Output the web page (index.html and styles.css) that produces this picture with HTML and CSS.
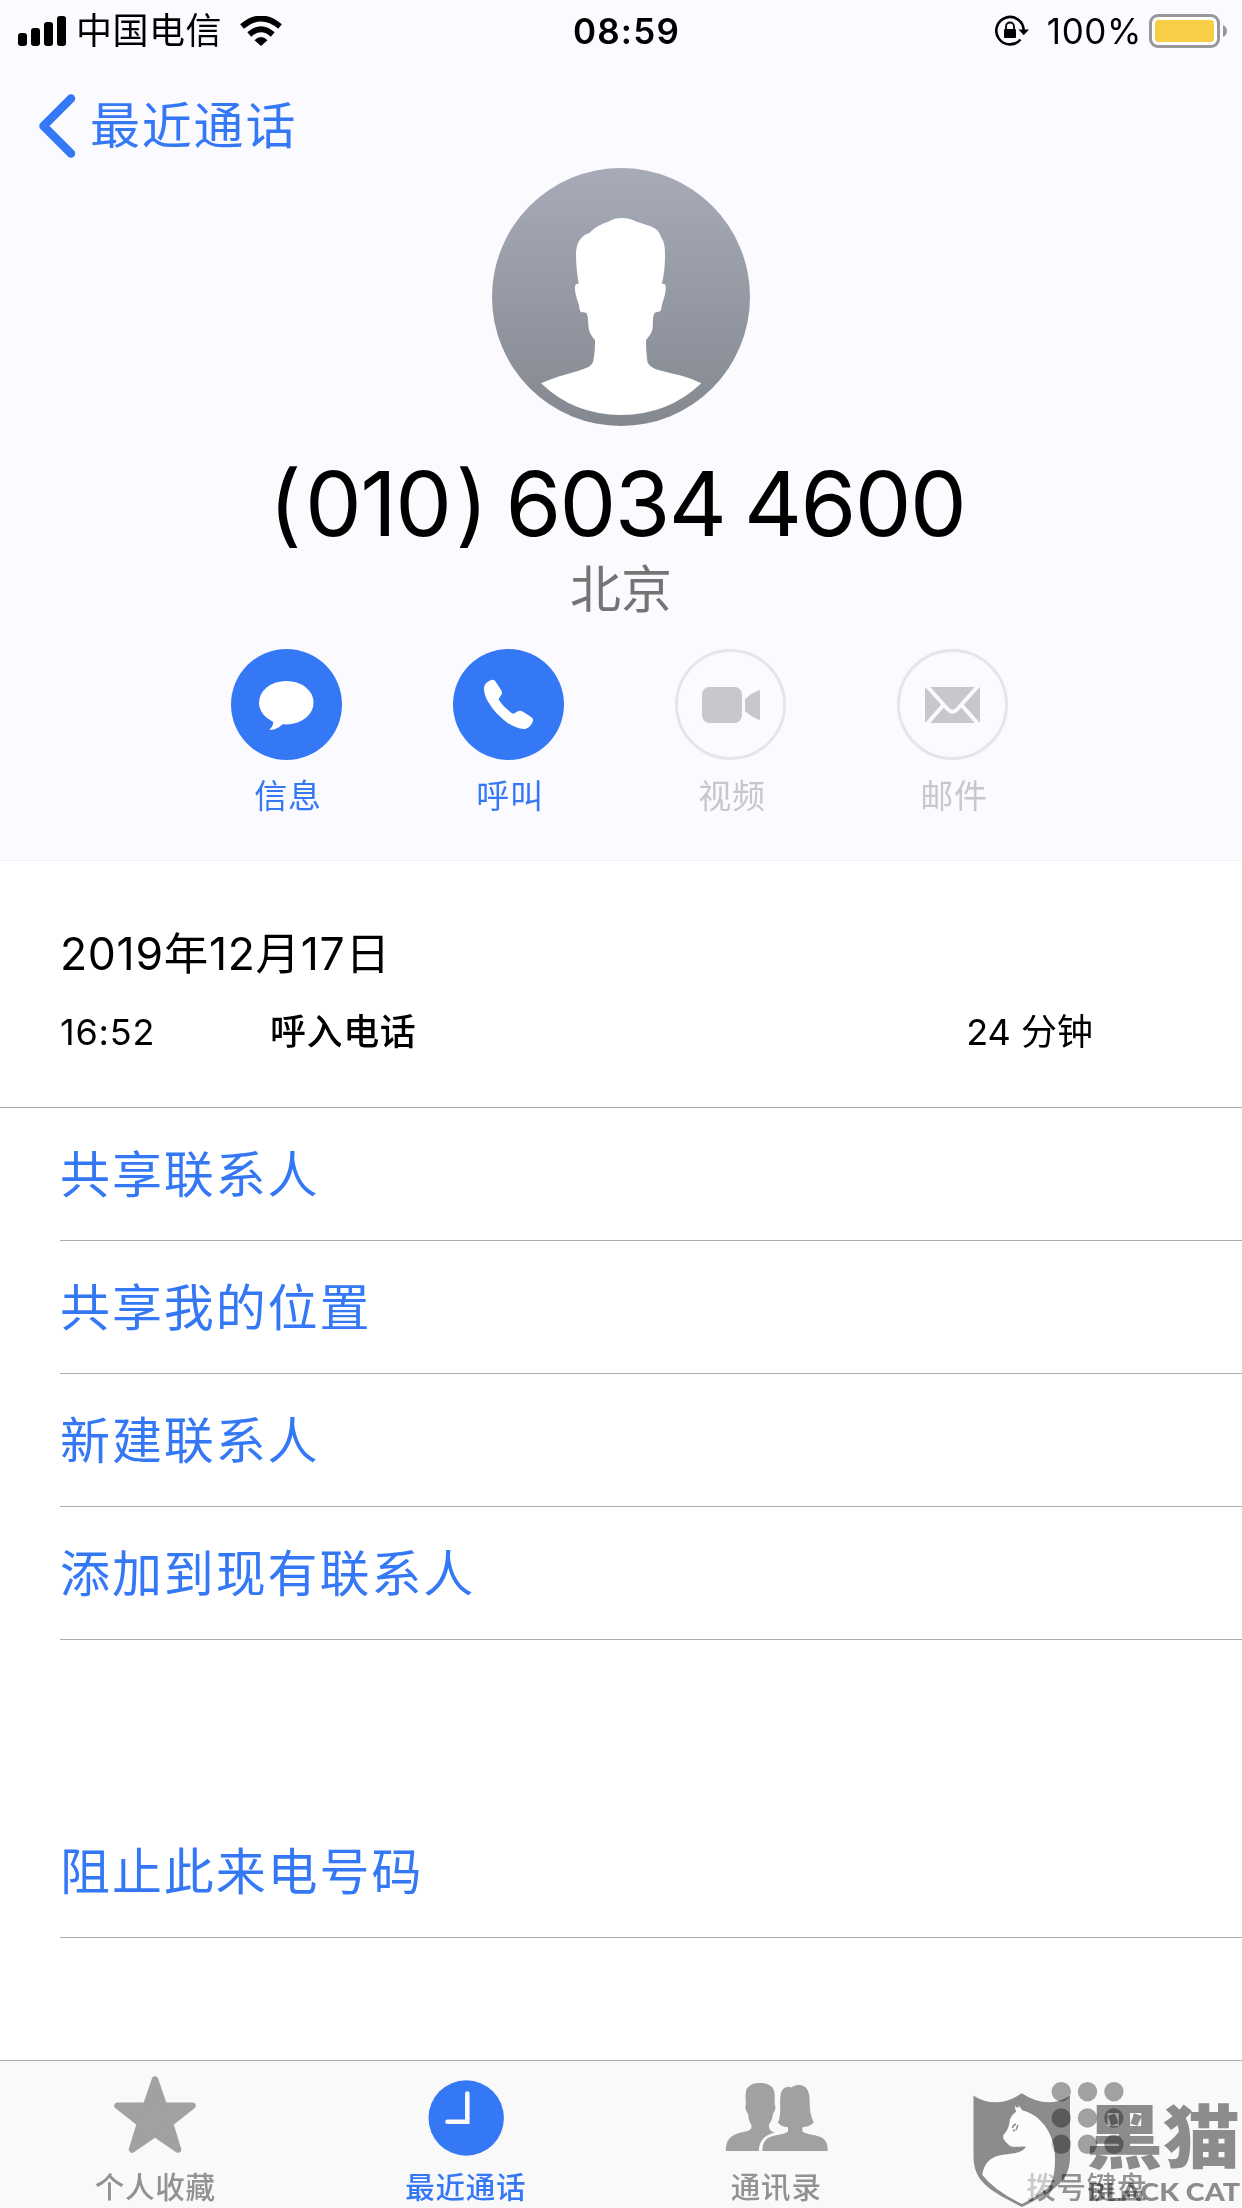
FILE: index.html
```html
<!DOCTYPE html>
<html lang="zh-CN">
    <head>
        <meta charset="UTF-8">
        <title>最近通话</title>
        <link rel="stylesheet" href="styles.css">
    </head>
    <body>
        <div class="header">
            <div class="status">
                <div class="status-left">
                    <svg class="signal" width="48" height="30" viewBox="0 0 48 30">
                        <rect x="0" y="17" width="9" height="13" rx="3"/>
                        <rect x="13" y="12" width="9" height="18" rx="3"/>
                        <rect x="26" y="6" width="9" height="24" rx="3"/>
                        <rect x="39" y="0" width="9" height="30" rx="3"/>
                    </svg>
                    <span class="carrier">中国电信</span>
                    <svg class="wifi" width="42" height="30" viewBox="0 0 42 30">
                        <path d="M2 10.5Q21-5.500 40 10.500M9.300 18.500Q21 8 32.700 18.500" fill="none" stroke="#000" stroke-width="5.800"/>
                        <path d="M14.500 24.200Q21 18 27.500 24.200L21 30z"/>
                    </svg>
                </div>
                <div class="time">08:59</div>
                <div class="status-right">
                    <svg width="34" height="32" viewBox="0 0 34 32">
                        <path d="M25.500 24.500A13.700 13.700 0 1 1 28.700 15" fill="none" stroke="#000" stroke-width="2.600"/>
                        <path d="M23.500 14.500h10.500l-5.300 5.800z"/>
                        <rect x="9" y="14" width="12" height="9" rx="1"/>
                        <path d="M11 15v-3.500a4 4 0 0 1 8 0v3.500" fill="none" stroke="#000" stroke-width="1.800"/>
                    </svg>
                    <span class="percent">100%</span>
                    <svg width="78" height="34" viewBox="0 0 78 34">
                        <rect x="1.500" y="1.500" width="68" height="31" rx="7.500" fill="#fff" stroke="#98989b" stroke-width="3"/>
                        <rect x="6" y="6" width="59" height="22" rx="3.500" fill="#f7ce46"/>
                        <path d="M74 11q4 2 4 6t-4 6z" fill="#98989b"/>
                    </svg>
                </div>
            </div>
            <div class="nav">
                <svg width="38" height="64" viewBox="0 0 38 64">
                    <path d="M33 4.500L5.500 32 33 59.500" fill="none" stroke="#3478f6" stroke-width="8.500" stroke-linecap="round" stroke-linejoin="round"/>
                </svg>
                <span>最近通话</span>
            </div>
            <svg class="avatar" width="258" height="258" viewBox="0 0 258 258">
                <defs>
                    <linearGradient id="grey" x1="0" y1="0" x2="0" y2="1">
                        <stop offset="0" stop-color="#a7abb8"/>
                        <stop offset="1" stop-color="#848890"/>
                    </linearGradient>
                </defs>
                <circle cx="129" cy="129" r="129" fill="url(#grey)"/>
                <path fill="#fff" d="M129.700 50C125 50 121 51 116.300 53.700C108 56.500 102 60 97 65.300C87 68 84 78 84 86C84 96 85 106 86.700 116C84 115.300 82.700 117 83 121C83.500 130 87 134 87.700 142C88.500 145.500 92 144 94.700 145C96.500 150 96 157 97 162C98 166 101 170 103 172C103 181 102.500 188 101 194C99 199 93 200.500 86 203C73 206.500 60 210 49 215.300Q82 247 129 247Q176 247 209.300 215.300C197 209 186 207 172 203.500C164 201.500 158 200 155.500 194C154.500 187 154 180 154 172C157 168.500 160 165 160.700 160.300C161 155 160.500 149 162.500 145C165 143 168.500 145 169.300 141C170 134 173 130 173.700 121C174 117 173 115 169.700 116C172 107 173 99 173 88.700C173 83 173 77 171 72.500C168 68 168 63 162 60C157 57 151 56 144.700 53.700C139 51 135 50 129.700 50z"/>
            </svg>
            <div class="number">(<span class="area">010</span>) 6034 4600</div>
            <div class="city">北京</div>
            <div class="actions">
                <div class="action">
                    <svg width="111" height="111" viewBox="0 0 111 111">
                        <circle cx="55.500" cy="55.500" r="55.500" fill="#3478f6"/>
                        <ellipse cx="55.300" cy="53.700" rx="27.300" ry="21.800" fill="#fff"/>
                        <path d="M41 71Q44.500 75 38.300 80.700Q45 81.500 52 75z" fill="#fff"/>
                    </svg>
                    <span>信息</span>
                </div>
                <div class="action">
                    <svg width="111" height="111" viewBox="0 0 111 111">
                        <circle cx="55.500" cy="55.500" r="55.500" fill="#3478f6"/>
                        <path fill="#fff" d="M37.500 31.300Q40.800 30 42.300 32.300L48.500 41.700Q49.500 43.500 48.500 45.500Q46 49 45.700 50.700Q51 59 59.700 64.700C62 64.500 64 62 67 61.700Q68.500 61.700 70 62.800L78.500 68.200Q80.500 69.500 80 72Q77.500 78.500 73 79.700C66 81 56 76.500 46.500 67C37 57.500 30.500 47 31 39Q31.500 34 37.500 31.300z"/>
                    </svg>
                    <span>呼叫</span>
                </div>
                <div class="action disabled">
                    <svg width="111" height="111" viewBox="0 0 111 111">
                        <circle cx="55.500" cy="55.500" r="54" fill="none" stroke="#e5e5ea" stroke-width="3"/>
                        <rect x="27" y="38" width="40" height="36" rx="7.500" fill="#c7c7cc"/>
                        <path d="M70 50Q77 43.500 85 41V71Q77 68.500 70 62z" fill="#c7c7cc"/>
                    </svg>
                    <span>视频</span>
                </div>
                <div class="action disabled">
                    <svg width="111" height="111" viewBox="0 0 111 111">
                        <circle cx="55.500" cy="55.500" r="54" fill="none" stroke="#e5e5ea" stroke-width="3"/>
                        <rect x="28" y="38" width="55" height="36" fill="#c7c7cc"/>
                        <path d="M28.500 35.500L50.500 60Q55.500 65.500 60.500 60L82.500 35.500M28.500 76.500L46 56.500M82.500 76.500L65 56.500" fill="none" stroke="#fbfaff" stroke-width="4"/>
                    </svg>
                    <span>邮件</span>
                </div>
            </div>
        </div>
        <div class="call">
            <div class="date">2019年12月17日</div>
            <div class="detail">
                <span class="at">16:52</span>
                <span class="kind">呼入电话</span>
                <span class="length">24 分钟</span>
            </div>
        </div>
        <div class="list">
            <div class="row">共享联系人</div>
            <div class="row">共享我的位置</div>
            <div class="row">新建联系人</div>
            <div class="row">添加到现有联系人</div>
            <div class="row block">阻止此来电号码</div>
        </div>
        <div class="tabs">
            <div class="tab">
                <svg width="110" height="90" viewBox="0 0 110 90">
                    <path d="M55 9.500L64 35.800H92.500L70 53.500L78 79.500L55 63.800L32 79.500L40 53.500L17.500 35.800H46z" stroke="#a1a1a1" stroke-width="6.500" stroke-linejoin="round"/>
                </svg>
                <span>个人收藏</span>
            </div>
            <div class="tab active">
                <svg width="110" height="90" viewBox="0 0 110 90">
                    <circle cx="55.200" cy="48" r="37.700"/>
                    <path d="M56.300 23.500V51.700H36.500" fill="none" stroke="#f9f9f9" stroke-width="4.600" stroke-linecap="round"/>
                </svg>
                <span>最近通话</span>
            </div>
            <div class="tab">
                <svg width="110" height="90" viewBox="0 0 110 90">
                    <path d="M4.800 81C4.800 71 8 66 18.800 62.700C24 61.500 29.500 61 30.400 58V54.500C28 52 27.500 47 27 43.500C25 42 23.500 36 25 34.500C24.500 30 24.300 26 25 21.500C25.500 17 28 17 30.400 14.500Q34 12.500 38.800 13C43 13 47 14 50.400 16.500C54 20 54 24 53.500 34.500C55.500 36 54 42 52 43.500C51.500 48 50.500 51 48 54.500C48 58 48 61 53.800 62.300C43 65.500 38 71 37.800 81z"/>
                    <path d="M41.400 81C41.400 74 43.500 69.500 49 67C55 64.500 64 64.500 67 61.500V57.300C63 57 59 55.500 56.800 52.500C59 49 59.400 43 59.200 36C59 27 59 18 66 17Q69 16.500 70.400 17.500C74 14.500 80 14 84 17C88 20.500 88.600 25 88.700 31.700C88.500 40 90 47 92.800 52.500C90 55.500 86 57 81.400 57.300V61.500C85 64.500 94 64.500 99.500 67C105 69.500 106.800 74 106.800 81z"/>
                </svg>
                <span>通讯录</span>
            </div>
            <div class="tab">
                <svg width="110" height="90" viewBox="0 0 110 90">
                    <circle cx="29.200" cy="21.700" r="9.700"/>
                    <circle cx="55.500" cy="21.700" r="9.700"/>
                    <circle cx="81.900" cy="21.700" r="9.700"/>
                    <circle cx="29.200" cy="48" r="9.700"/>
                    <circle cx="55.500" cy="48" r="9.700"/>
                    <circle cx="81.900" cy="48" r="9.700"/>
                    <circle cx="29.200" cy="74.300" r="9.700"/>
                    <circle cx="55.500" cy="74.300" r="9.700"/>
                    <circle cx="81.900" cy="74.300" r="9.700"/>
                </svg>
                <span>拨号键盘</span>
            </div>
        </div>
        <!-- watermark over the last tab -->
        <svg class="cat-body" width="272" height="118" viewBox="0 0 272 118">
            <path d="M12.300 85C13 78 17 69 27 66C36 63 51 65 56 56.700C50 56 45 58 40 56Q35 52 33.300 48.500V45C38 40 39 36 39.500 32C40 27 43 24 46 21.700L44.700 16L48 18L49 15.800L52.500 20.500C69 24 85 42 85 68C85 80 84 91 78 98Q66 107 52 114Q25 101 12.300 85z" fill="#fff" fill-opacity=".5"/>
        </svg>
        <svg class="watermark" width="272" height="118" viewBox="0 0 272 118">
            <path fill-rule="evenodd" d="M3.500 5.700Q27 20 51.700 3.300Q77 20 100 5.700V66C100 91 86 100 52 117C18 100 3.500 91 3.500 66zM12.300 85Q25 101 52 114Q66 107 78 98C84 91 85 80 85 68C85 42 69 24 52.500 20.500L49 15.800L48 18L44.700 16L46 21.700C43 24 40 27 39.500 32C39 36 38 40 33.300 45V48.500Q35 52 40 56C45 58 50 56 56 56.700C51 65 36 63 27 66C17 69 13 78 12.300 85z"/>
            <path d="M42.500 38Q43 35 46 34M48 35L46 40M43 40L45 41" fill="none" stroke="#8c8a8b" stroke-width="1.500"/>
            <text class="brand" x="116" y="73" textLength="154" lengthAdjust="spacingAndGlyphs">黑猫</text>
            <text class="brand-en" x="117" y="111" textLength="153" lengthAdjust="spacingAndGlyphs">BLACK CAT</text>
        </svg>
    </body>
</html>
```
FILE: styles.css
```css
html{
    background-color:#fff;
}
body{
    position:relative;
    display:flex;
    flex-direction:column;
    width:1242px;
    height:2208px;
    margin:0;
    overflow:hidden;
    color:#000;
    font-family:Inter, "Noto Sans CJK SC", sans-serif;
}
svg{
    display:block;
    flex:none;
}
.header{
    box-sizing:border-box;
    display:flex;
    flex-direction:column;
    align-items:center;
    height:861px;
    background:#fbfaff;
    border-bottom:1px solid #efeff4;
}
.status{
    box-sizing:border-box;
    display:grid;
    grid-template-columns:1fr auto 1fr;
    align-items:center;
    width:100%;
    height:60px;
    padding:0 15px 0 18px;
    font-size:36px;
    line-height:60px;
}
.status-left,
.status-right{
    display:flex;
    align-items:center;
}
.status-right{
    justify-content:flex-end;
}
.carrier{
    margin:1px 18px 0 10px;
    letter-spacing:.5px;
}
.time{
    padding:0 0 0 8px;
    font-size:35px;
    font-weight:600;
    letter-spacing:1.2px;
}
.percent{
    margin:1px 7px 0 18px;
    font-size:35px;
    letter-spacing:.6px;
}
.nav{
    box-sizing:border-box;
    display:flex;
    align-items:center;
    align-self:flex-start;
    gap:14px;
    height:108px;
    padding:24px 0 0 38px;
    color:#3478f6;
    font-size:50px;
    line-height:64px;
    letter-spacing:1.8px;
}
.number{
    margin:26px 8px 0 0;
    font-size:90px;
    line-height:104px;
    letter-spacing:-1.6px;
    word-spacing:-5px;
    white-space:nowrap;
}
.area{
    margin:0 5px;
}
.city{
    margin-top:2px;
    color:#747474;
    font-size:51px;
    line-height:64px;
}
.actions{
    display:flex;
    gap:111px;
    margin:27px 3px 0 0;
}
.action{
    display:flex;
    flex-direction:column;
    align-items:center;
    width:111px;
    color:#3478f6;
    font-size:33px;
    line-height:40px;
    letter-spacing:.8px;
}
.action span{
    margin:16px 0 0 3px;
}
.disabled{
    color:#c7c7cc;
}
.call{
    box-sizing:border-box;
    height:247px;
    padding:61px 60px 0;
    border-bottom:1px solid #aaa;
}
.date{
    font-size:44.5px;
    line-height:64px;
    letter-spacing:.7px;
}
.detail{
    display:flex;
    margin-top:21px;
    font-size:36px;
    line-height:50px;
}
.at{
    width:210px;
    letter-spacing:.8px;
}
.kind{
    flex:1;
    font-weight:500;
    letter-spacing:.6px;
}
.length{
    margin-right:89px;
}
.list{
    flex:1;
    padding-left:60px;
}
.row{
    box-sizing:border-box;
    height:133px;
    border-bottom:1px solid #adadb0;
    color:#3478f6;
    font-size:50px;
    line-height:135px;
    letter-spacing:1.9px;
}
.block{
    margin-top:165px;
}
.tabs{
    box-sizing:border-box;
    display:flex;
    height:148px;
    padding-top:9px;
    border-top:1px solid #adadad;
    background:#f9f9f9;
}
.tab{
    display:flex;
    flex:1;
    flex-direction:column;
    align-items:center;
    color:#929292;
    font-size:29.5px;
    font-weight:500;
    line-height:40px;
    letter-spacing:.8px;
}
.tab svg{
    fill:#a1a1a1;
}
.tab span{
    margin-top:7px;
}
.active{
    color:#3478f6;
}
.active svg{
    fill:#3478f6;
}
.cat-body,
.watermark{
    position:absolute;
    right:0;
    bottom:0;
}
.watermark{
    fill:#908e8f;
    mix-blend-mode:multiply;
}
.brand{
    font:900 69px "Noto Sans CJK SC", sans-serif;
}
.brand-en{
    font:900 24px Lato, sans-serif;
}
```
